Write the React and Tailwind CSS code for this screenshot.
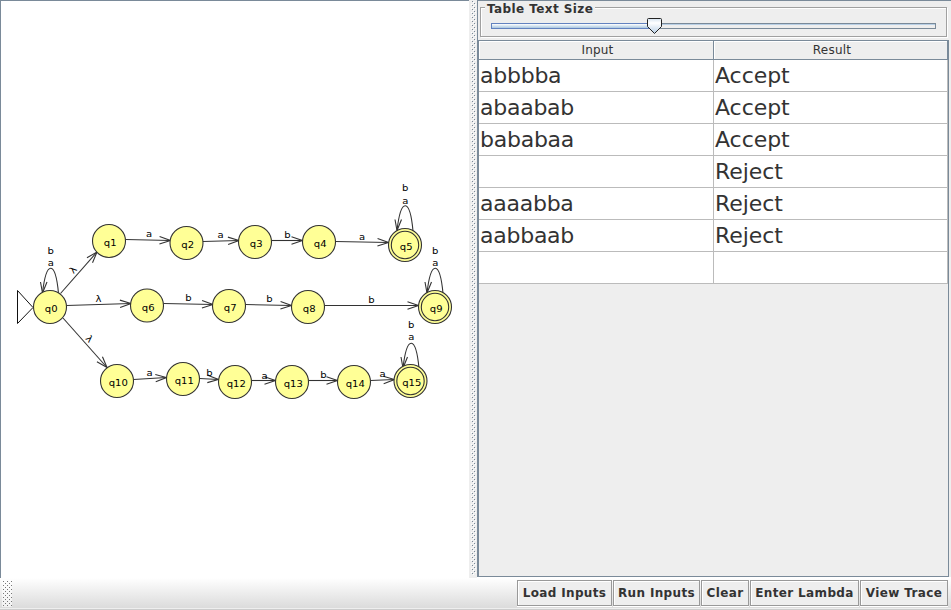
import React from "react";

const nodes = [
  ["q0", 50, 307], ["q1", 109, 241], ["q2", 186.5, 243], ["q3", 255, 242],
  ["q4", 319, 242], ["q5", 405, 245, true], ["q6", 147, 305.5], ["q7", 229, 306],
  ["q8", 308, 307], ["q9", 435, 307, true], ["q10", 117, 381], ["q11", 183, 379],
  ["q12", 235, 382], ["q13", 292, 382], ["q14", 354, 382], ["q15", 410.5, 381, true],
];

// x1, y1, x2, y2, label, label x, label baseline, label rotation
const edges = [
  [60.5, 293.5, 97, 252, "λ", 75.5, 272, -48],
  [66.5, 305.5, 131, 303.5, "λ", 98.5, 302, 0],
  [63, 318, 107, 367.5, "λ", 87, 341, 48],
  [125.5, 239.5, 170.5, 240.5, "a", 149, 237, 0],
  [203, 241.5, 239, 240.5, "a", 220.5, 238, 0],
  [271.5, 240.5, 302.5, 240.5, "b", 287.5, 238, 0],
  [335.5, 241.5, 388.5, 242.5, "a", 362, 239.5, 0],
  [163.5, 303.5, 213, 304.5, "b", 188.5, 301, 0],
  [245.5, 304.5, 291.5, 305.5, "b", 269.5, 302, 0],
  [324.5, 305.5, 418.5, 305.5, "b", 371.5, 303, 0],
  [133.5, 379.5, 166.5, 377.5, "a", 149.5, 376, 0],
  [199.5, 378.5, 218.5, 379.5, "b", 209.5, 376, 0],
  [251.5, 380.5, 275.5, 380.5, "a", 264.5, 378.5, 0],
  [308.5, 380.5, 337.5, 380.5, "b", 323.5, 378, 0],
  [370.5, 380.5, 394.5, 379.5, "a", 382.5, 377, 0],
];

const loops = [
  [50, 291, 254, 266],
  [404.5, 228.5, 191, 204],
  [434.5, 291, 254, 266],
  [410.5, 366, 328, 340],
];

// Labels are drawn slightly wider than tall
function Label({ x, y, rot = 0, children }) {
  return (
    <text transform={`translate(${x} ${y}) rotate(${rot}) scale(1.08 1)`} stroke="none" fill="#000">
      {children}
    </text>
  );
}

function Edge({ e }) {
  const [x1, y1, x2, y2, label, lx, ly, rot] = e;
  const deg = (Math.atan2(y2 - y1, x2 - x1) * 180) / Math.PI;
  return (
    <g>
      <line x1={x1} y1={y1} x2={x2} y2={y2} />
      <path d="M-11 -3.7L0 0L-11 3.7" transform={`translate(${x2} ${y2}) rotate(${deg})`} />
      <Label x={lx} y={ly} rot={rot}>{label}</Label>
    </g>
  );
}

function Automaton() {
  return (
    <svg width="468" height="576" viewBox="1 1 468 576" fill="none" stroke="#333" strokeWidth="1.1"
      textAnchor="middle" className="block font-['DejaVu_Sans',sans-serif] text-[9.3px]">
      <path d="M33 307.5L17.5 290.5V323.5Z" stroke="#111" strokeWidth="1" />
      {edges.map((e, i) => <Edge key={i} e={e} />)}
      {loops.map(([x, y, b, a]) => (
        <g key={`${x}-${y}`}>
          <path d={`M${x + 8.5} ${y + 2.5}C${x + 5.5} ${y - 30} ${x - 3.5} ${y - 32} ${x - 7.5} ${y + 2}`} />
          <path d={`M${x - 9.5} ${y - 9}L${x - 7.5} ${y + 2}L${x - 3} ${y - 9}`} />
          <Label x={x + 0.7} y={b}>b</Label>
          <Label x={x + 0.7} y={a}>a</Label>
        </g>
      ))}
      {nodes.map(([name, x, y, final]) => (
        <g key={name}>
          <circle cx={x} cy={y} r="16.5" fill="#ffff96" />
          {final && <circle cx={x} cy={y} r="13.7" />}
          <Label x={x + 1.2} y={y + 5}>{name}</Label>
        </g>
      ))}
    </svg>
  );
}

const rows = [
  ["abbbba", "Accept"], ["abaabab", "Accept"], ["bababaa", "Accept"], ["", "Reject"],
  ["aaaabba", "Reject"], ["aabbaab", "Reject"], ["", ""],
];

function Header({ children }) {
  return (
    <div className="h-[19px] border-r border-b border-[#7a8a99] bg-[#eee] pl-[3px] text-center text-[12px] leading-[19px] tracking-[0.2px] shadow-[inset_1px_1px_0_#fff]">
      {children}
    </div>
  );
}

function TextSizeSlider() {
  return (
    <div className="h-[39px] pt-[6px] pr-[2px] pl-[2px]">
      <fieldset className="relative h-[30px] border border-[#a0a0a0] shadow-[inset_1px_1px_0_#fff,1px_1px_0_#fff]">
        <div className="absolute -top-[7px] left-[4px] h-[15px] bg-[#eee] px-[2px] text-[12px] leading-[16px] font-bold tracking-[0.42px] whitespace-nowrap">
          Table Text Size
        </div>
        <div className="mt-[15px] mr-[10px] ml-[10px] flex h-[6px] border border-[#7a8a99] bg-[#eee] shadow-[inset_0_1px_0_#b8cfe5]">
          <div className="-my-px -ml-px h-[6px] w-[164px] border border-[#6382bf] bg-linear-to-b from-white to-[#a9c6df]" />
        </div>
        <svg className="absolute top-[10px] left-[166px]" width="16" height="17">
          <defs>
            <linearGradient id="thumb" x2="0" y2="1">
              <stop offset="0" stopColor="#d5e3f0" />
              <stop offset=".3" stopColor="#fff" />
              <stop offset="1" stopColor="#b8cfe5" />
            </linearGradient>
          </defs>
          <path d="M.5 1.5Q.5 .5 1.5 .5H13.5Q14.5 .5 14.5 1.5V8.5L7.5 15.5L.5 8.5Z" fill="url(#thumb)" stroke="#222" />
        </svg>
      </fieldset>
    </div>
  );
}

function Results() {
  return (
    <div className="h-[537px] border border-[#7a8a99] bg-[#eee]">
      <div className="grid grid-cols-[235px_234px]">
        <Header>Input</Header>
        <Header>Result</Header>
        {rows.flat().map((text, i) => (
          <div key={i} className={`h-8 border-r border-b border-[#bbb] bg-white pl-px text-[22px] leading-[31px] whitespace-pre ${i % 2 ? "tracking-[-0.05px]" : "tracking-[-0.25px]"}`}>
            {text}
          </div>
        ))}
      </div>
    </div>
  );
}

const buttons = [
  ["Load Inputs", "w-[95px]"], ["Run Inputs", "w-[87px]"], ["Clear", "w-12"],
  ["Enter Lambda", "w-[109px]"], ["View Trace", "w-[88px]"],
];

export default function App() {
  return (
    <div className="flex h-[610px] w-[951px] flex-col overflow-hidden bg-[#eee] font-['DejaVu_Sans',sans-serif] text-[#333]">
      <div className="flex h-[578px] bg-white">
        <div className="w-[469px] border-t border-l border-[#7a8a99] bg-white">
          <Automaton />
        </div>
        <svg className="block" width="8" height="578">
          <defs>
            <pattern id="grip" x="3" y="1" width="4" height="4" patternUnits="userSpaceOnUse">
              <path d="M0 0h1v1h-1zM2 2h1v1h-1z" fill="#7a8a99" />
              <path d="M1 1h1v1h-1zM3 3h1v1h-1z" fill="#fff" />
            </pattern>
          </defs>
          <rect width="8" height="578" fill="#eee" />
          <rect x="2" y="1" width="5" height="574" fill="url(#grip)" />
        </svg>
        <div className="h-[577px] w-[474px] border-t border-l border-[#7a8a99] bg-[#eee] pr-[2px]">
          <TextSizeSlider />
          <Results />
        </div>
      </div>
      <div className="flex h-8 items-start border-b border-[#ccc] bg-linear-to-b from-white to-[#dadada] pl-[2px] shadow-[inset_0_-1px_0_#eee]">
        <svg className="mt-[2px] block" width="11" height="27">
          <defs>
            <pattern id="toolgrip" x="1" y="1" width="4" height="4" patternUnits="userSpaceOnUse">
              <path d="M0 0h1v1h-1zM2 2h1v1h-1z" fill="#777" />
            </pattern>
          </defs>
          <rect width="10" height="27" fill="#fff" fillOpacity=".6" />
          <rect width="10" height="27" fill="url(#toolgrip)" />
        </svg>
        <div className="ml-auto flex gap-px pt-[2px] pr-[3px]">
          {buttons.map(([label, width]) => (
            <button key={label} className={`${width} h-[26px] border border-[#999] bg-[#eee] text-[12px] leading-[25px] font-bold tracking-[0.03em] whitespace-nowrap shadow-[inset_1px_1px_0_#fff,0_1px_0_#fff]`}>
              {label}
            </button>
          ))}
        </div>
      </div>
    </div>
  );
}
